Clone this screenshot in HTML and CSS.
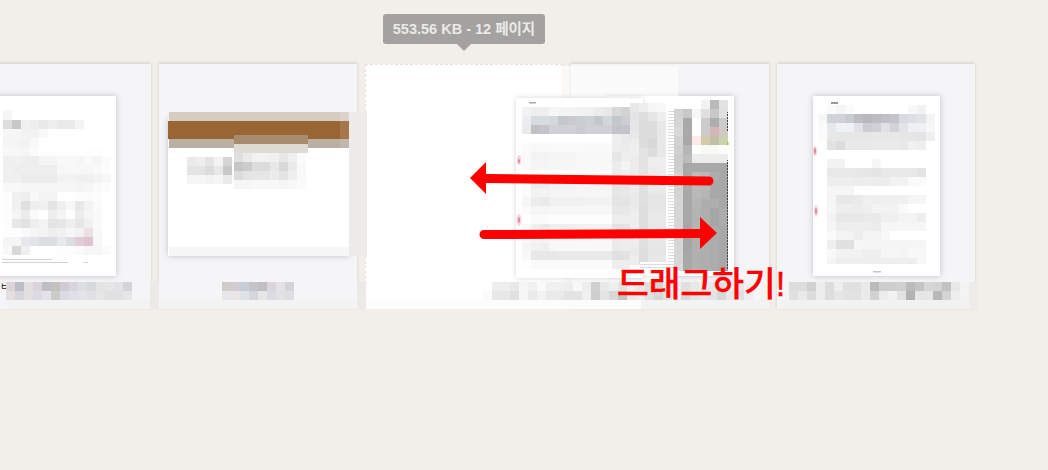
FILE: index.html
```html
<!DOCTYPE html>
<html lang="ko">
<head>
<meta charset="utf-8">
<title>페이지 정렬</title>
<link rel="stylesheet" href="styles.css">
</head>
<body>
<main class="stage">
  <div class="tooltip">553.56 KB - 12 페이지</div>
  <section class="cards">
    <article class="card"><div class="thumb"><div class="page"></div></div></article>
    <article class="card"><div class="thumb"><div class="page page-wide"></div></div></article>
    <article class="card card-empty"></article>
    <article class="card"><div class="thumb"><div class="page"></div></div></article>
    <article class="card"><div class="thumb"><div class="page"></div></div></article>
  </section>
  <div class="ghost"><div class="page"></div></div>
  <span class="cut-name">ㅂ</span>
  <svg id="mosaic" class="layer" width="1048" height="470" viewBox="0 0 1048 470" aria-hidden="true">
    <g>
      <rect x="169" y="112" width="180" height="9" fill="#d6ccc2"/>
      <rect x="168" y="121" width="181" height="18" fill="#9a6535"/>
      <rect x="169" y="139" width="180" height="9" fill="#b9afa2"/>
      <rect x="169" y="247" width="180" height="9" fill="#f6f6f6"/>
      <rect x="340" y="112" width="9" height="144" fill="#fff" fill-opacity=".12"/>
      <rect x="234" y="135" width="74" height="9" fill="#a88b6c"/>
      <rect x="234" y="144" width="74" height="9" fill="#dddbd3"/>
      <rect x="349" y="112" width="18" height="144" fill="#eeecea"/>
      <rect x="150" y="282" width="9" height="27" fill="#eceae6"/>
      <rect x="357" y="282" width="9" height="27" fill="#eceae6"/>
      <rect x="969" y="282" width="9" height="27" fill="#eeecea"/>
      <rect x="6" y="300" width="144" height="9" fill="#f3f3f3"/>
      <rect x="159" y="300" width="198" height="9" fill="#f3f3f3"/>
      <rect x="366" y="300" width="275" height="9" fill="#fdfcfc"/>
      <rect x="641" y="300" width="129" height="9" fill="#f3f3f3"/>
      <rect x="780" y="300" width="189" height="9" fill="#f2f2f2"/>
      <rect x="668" y="110" width="6" height="160" fill="url(#stripes)"/>
      <rect x="640" y="262" width="34" height="6" fill="url(#stripes)"/>
      <rect x="727" y="112" width="1" height="20" fill="url(#dots)"/>
      <rect x="727" y="160" width="1" height="110" fill="url(#dots)"/>
      <rect x="727" y="142" width="1.5" height="3" fill="#8ccf3c"/>
      <ellipse class="stamp" cx="519" cy="160" rx="2" ry="5"/>
      <ellipse class="stamp-core" cx="519" cy="161" rx="1" ry="2"/>
      <ellipse class="stamp" cx="519" cy="220" rx="2.5" ry="6"/>
      <ellipse class="stamp-core" cx="519" cy="220" rx="1" ry="3"/>
      <ellipse class="stamp" cx="815" cy="151" rx="2" ry="5"/>
      <ellipse class="stamp-core" cx="815" cy="151" rx="1" ry="3"/>
      <ellipse class="stamp" cx="816" cy="211" rx="2" ry="6"/>
      <ellipse class="stamp-core" cx="816" cy="211" rx="1" ry="3"/>
      <rect x="529" y="102" width="7" height="1.5" fill="#aaa"/>
      <rect x="831" y="102" width="7" height="2" fill="#999"/>
      <rect x="873" y="271" width="8" height="1.5" fill="#c4c4c4"/>
      <rect x="2" y="259" width="50" height="1" fill="#d4d4d4"/>
      <rect x="2" y="262" width="66" height="1" fill="#d4d4d4"/>
      <rect x="83" y="262" width="5" height="1" fill="#d4d4d4"/>
    </g>
    <defs>
      <pattern id="stripes" width="6" height="3" patternUnits="userSpaceOnUse">
        <rect width="6" height="3" fill="#fff"/>
        <rect width="6" height="1" fill="#dcdcdc"/>
      </pattern>
      <pattern id="dots" width="1" height="3" patternUnits="userSpaceOnUse">
        <rect width="1" height="2" fill="#444"/>
      </pattern>
    </defs>
  </svg>
  <svg class="layer" width="1048" height="470" viewBox="0 0 1048 470" aria-hidden="true">
    <line class="arrow-line" x1="709" y1="181" x2="486" y2="178.5"/>
    <polygon class="arrow-head" points="470,178 486,162 486,194"/>
    <line class="arrow-line" x1="484" y1="234.5" x2="702" y2="233.5"/>
    <polygon class="arrow-head" points="717,233 700,217 700,249"/>
  </svg>
  <p class="drag-label">드래그하기!</p>
</main>
<script src="mosaic.js"></script>
</body>
</html>
```
FILE: styles.css
```css
* { box-sizing: border-box; }
html, body { margin: 0; height: 100%; }
body {
  background: #f2efea;
  overflow: hidden;
  font-family: "Liberation Sans", "Noto Sans CJK KR", sans-serif;
}
.stage {
  position: relative;
  width: 1048px;
  height: 470px;
  overflow: hidden;
  padding-top: 64px;
}
.tooltip {
  position: absolute;
  left: 383px;
  top: 14px;
  width: 162px;
  height: 30px;
  border-radius: 3px;
  background: #a3a2a0;
  color: #ebeae8;
  font-size: 14.5px;
  font-weight: 700;
  line-height: 30px;
  text-align: center;
}
.tooltip::after {
  content: "";
  position: absolute;
  left: 74px;
  top: 30px;
  border: 7px solid transparent;
  border-top-color: #a3a2a0;
  border-bottom-width: 0;
}
.cards {
  display: flex;
  gap: 8px;
  margin-left: -47px;
}
.card {
  flex: 0 0 198px;
  height: 245px;
  padding-top: 32px;
  background: #f5f5f8;
  box-shadow: 0 -1px 3px rgba(90, 80, 70, .2);
}
.card-empty {
  background: #fff;
  border: 1px dashed #f0dcd8;
  box-shadow: none;
}
.thumb {
  display: flex;
  align-items: center;
  justify-content: center;
  height: 180px;
}
.page {
  width: 127px;
  height: 180px;
  background: #fff;
  box-shadow: 0 0 6px rgba(40, 40, 60, .25);
}
.page-wide {
  width: 181px;
  height: 137px;
  margin-top: 3px;
}
.ghost {
  position: absolute;
  left: 480px;
  top: 66px;
  width: 198px;
  height: 234px;
  padding: 32px 36px 0;
  background: rgba(255, 255, 255, .6);
}
.ghost .page {
  box-shadow: 0 0 5px rgba(40, 40, 60, .2);
}
.cut-name {
  position: absolute;
  left: 0;
  top: 281px;
  font-size: 10px;
  line-height: 12px;
  color: #111;
}
.layer {
  position: absolute;
  left: 0;
  top: 0;
}
.stamp { fill: #f6d5da; }
.stamp-core { fill: #dd8494; }
.arrow-line {
  stroke: #ff0000;
  stroke-width: 9;
  stroke-linecap: round;
}
.arrow-head { fill: #ff0000; }
.drag-label {
  position: absolute;
  left: 617px;
  top: 261px;
  margin: 0;
  color: #ff0000;
  font-size: 34.5px;
  font-weight: 500;
  -webkit-text-stroke: 0.4px #ff0000;
  line-height: 46px;
  white-space: nowrap;
}
```
FILE: mosaic.js
```js
// Pixelated (redacted) regions: each block is a 9px cell grid of colours.
var blocks = [
  // page 1
  { x: 3, y: 111, rows: [
    "f5",
    "dd c8 f0 ee e8 ee ea ea f4",
    "f6 f6 f3 f2 f8",
    "f5 f4 f2 f8",
    "f8 f7 f6 fb fe fe fe fe fe fe fd",
    "f0 f0 ee ee f5 f5 f8 f8 f6 f9 f5 fb",
    "f0 ee ee ee ee ee f7 f7 f7 f6 f9 fc",
    "f0 f0 ec ec ec ec f3 f3 f1 f1 f4 f7",
    "f8 f8 f6 f6 f6 f6 f6 f6 f4 f6 fa fc",
    "fd f0 ee f8 f3 f3 ff fe fc fb fd",
    "fd f0 e0 ee f0 e4 ee f7 e8 f3 fb",
    "fd f5 ec fa ff ee f4 fe ec f5 f9",
    "fd e8 e2 ee f4 e4 e6 ee e6 f0 fa",
    "fe fe fa f5 f4 ee f0 f6 f2 ecdfe4 f8",
    "f4f6f4 f5f6f4 e6e8ec e2e4e8 dcdee2 dcdee2 e6e8ec dcdee2 e2cdd6 dfc5d0 f6f8f7",
    "f8 d8 eef0ee ff ff ff fd fc fa f6 f6 fa"
  ]},
  // card labels
  { x: 6, y: 282, rows: [
    "dcd4d6 bdbdc8 e3dfe0 dbd3da bebfc4 c1c1bd d0cbd6 d6d5dd dddee0 d8d9dc e3 e6 e3e3e5 d3d3d9",
    "e4dee0 d7d6df e4dfe2 dcdbe5 e3e2ea cbcbc7 dcdae3 e0e0e6 e4e4e8 dfe0e3 e6 e1e1e3 e1e1e3 e6e6e8"
  ]},
  { x: 222, y: 282, rows: [
    "cfcbc8 d3cad3 c9ced6 c3c3c8 c1bfc4 dbd5de e3e3e5 d3d3d8",
    "e7e7e9 e9e4e6 dde3e6 d6d4dc e6 dcdae3 e2e2e5 dfdfe3"
  ]},
  { x: 483, y: 282, rows: [
    "ff ee ee e8 f6 f0 fa f0 f0 ee f8 ee d0 e8 ee e4 f0 e8 e0 d4 e8 ee e0 e8 ee e8 e0 ee e8 f0 f5",
    "fa e8 e8 e0 f6 ea f2 ea ea e4 e4 f0 ce e4 d8 c4 e8 ee e0 d6 e0 f0 d8 e4 e8 e4 d8 e8 e0 ee f5"
  ]},
  { x: 789, y: 282, rows: [
    "dd dd d0 ed dd ee e0 e0 ea bb ce ce cf bb c4 d6 d4 c2 e8 f3",
    "e0 ea dd ec dc e6 e2 e2 ea d2 ec f1 e2 b3 e6 e6 b8 d4 ee f3"
  ]},
  // page 2 text
  { x: 187, y: 157, rows: [
    "ea ee e4 f3 d4",
    "e4 e4 dc e8 c8",
    "f6 f6 f3 f5 ea"
  ]},
  { x: 234, y: 153, rows: [
    "e0 ea f2 f2 f0 e8 f0 fa",
    "c6 cc dc dc e8 d8 ea f9",
    "dc e4 e6 e6 ec e4 ef f9",
    "f6 f6 f8 f8 f8 f5 f8 fb"
  ]},
  // dragged page
  { x: 522, y: 107, rows: [
    "f2 ee ee f6 f4 f4 f2 f0 ec e8 d8 d2",
    "ecedf0 d8dbe0 d8dbe0 d4d7db c3c6cb c8cacf cacdd2 cdd0d6 c5c8cd d3d6da c4c7cc ccced3",
    "ea c0c0c6 c4c4ca d0d0d6 d0d0d6 d0d0d6 cbcbd1 d0d0d6 cfcfd5 cfcfd5 c3c3c9 c3c3c9",
    "ff ff ff ff ff ff ff ff ff ff ee ea",
    "fb f9 f9 fa fa fa fa f9 f9 f9 ee ec",
    "fa f3 f3 f5 f5 f5 f8 f8 f8 f8 e6 ee",
    "fa f5 f5 f7 f7 f7 f8 f8 f8 f8 ec f4",
    "ff fc fc ff ff fc fc fc fc fc ec ee",
    "fb ee ee f3 f3 f3 f6 f6 f6 f6 e4 e6",
    "fb f2 f3 f5 f5 f5 f6 f6 f6 f6 e6 e8",
    "f6 ec ea f0 f0 f0 f0 f2 f2 f2 e4 e4",
    "fa f5 f5 f7 f7 f7 f7 f7 f7 f7 e8 e8",
    "ff fb fb fd fd fd fd fd fd fd ee ee",
    "f8 ee ea ee ee ee f2 f2 f2 f2 e2 e4",
    "fb f5 f5 f8 f8 f8 f8 f8 f8 f8 ea ec",
    "f5 f2 f0 f7 f8 f8 f8 f8 f8 f8 ea ec",
    "f8 e8 e8 e8 ea ea ea ea ea ea e0 e2",
    "fd fa fa fa fb fb fb fb fb fb ee ee"
  ]},
  { x: 630, y: 103, rows: [
    "e8 ee f6 f8",
    "e4 dd e6 ee",
    "e6 dc dc e8",
    "e8 dc dc e8",
    "ee dd d8 e8",
    "ee e3 dd e8",
    "ec e3 ee ee",
    "ec e4 ec ec",
    "ee e0 e6 ea",
    "ec e0 ea ea",
    "ea e0 e6 e6",
    "ea de e6 e6",
    "ee de e8 e8",
    "ee de e8 e8",
    "ea de e6 e6",
    "ee e0 e8 e8",
    "ea de e6 e6",
    "ee de e8 e8"
  ]},
  // page 4 right side
  { x: 701, y: 100, rows: [ "f2 b9 e2" ] },
  { x: 674, y: 109, rows: [
    "d2 c8 f6 e0 c8 e0",
    "d5 a9 ff cc ae cc",
    "d8 aa ff cc d5b5b5 d2c8c8",
    "d2 a8 ffe8e8 d4cbab bfc0a5 c8d4b0",
    "d0 b5 ff f8fbf5 f8fbf5 fbfcf8",
    "cc bb ec ec ec ec",
    "ce a8 a8 a8 a8 a8",
    "d4 a8 bb b8 ad a8",
    "d4 aa ba b8 a8 a8",
    "d4 a8 b8 b5 a8 a8",
    "d6 a8 b6 ae ae a8",
    "d6 a8 b4 ae a6 ac",
    "d6 a8 b4 ae a6 ac",
    "d6 a6 b4 ae ac a8",
    "d6 a6 b0 ae ac a8",
    "d6 a6 b0 ae ac a8",
    "d6 a8 b0 ae ac a8",
    "d8 a8 b0 ae ac a8"
  ]},
  // page 5
  { x: 818, y: 105, rows: [
    "ff fa f5 fb ff ff ff ff ff ff f8 f2",
    "f8 d0d3da d0d3da c8cbd1 bdbdc2 b8b8bc bcbcc2 c0c0c6 c4c4ca d8dbe0 dcdfe3 e0e3e7 f3",
    "fa e6e8ee eef1f6 eef1f6 e0e2e8 cccdd3 cfd0d6 e0e1e6 d2d3d9 e2e4e8 eef0f4 eef0f4 f6f7f9",
    "fb e8 e6 e6 e6 e6 e8 e8 e8 e6 e6 e4 f0",
    "ff e2 dc e8 e8 e8 ea ea ea e8 f0 ee",
    "ff ff ff ff ff ff ff ff ff",
    "ff f2 f2 ff ff ff f7",
    "ff e8 e8 e8 e8 e6 e4 e8 e8 e8 e8 e4",
    "ff ee ee ee ec ee ec ec f2 f2 fa fa",
    "ff f6 f6 f6",
    "ff f6 e8 e8 ea f0 ee f0 f0 f0 f5 f5",
    "ff f6 ee ee ec ee f3 f3 f3 fa",
    "ff f3 e8 e8 e8 ea ea f0 f0 f4 f4 ee",
    "ff f6 ee ee ee ee ec f6 f6 f6 f6 f6",
    "ff fa f3 f3 ee f3 f3 f8",
    "ff ee e0 e0 f7 f5 f5 f5 f5 f5 f6 f6",
    "ff f8 f2 f2 f2 ef ef f6 f6 f4 f8 f8"
  ]},
  { x: 827, y: 258, h: 6, rows: [ "f4 ee ee ee ee ee ee ee ee ee f8" ] }
];

var SVG_NS = "http://www.w3.org/2000/svg";
var layer = document.getElementById("mosaic");
var fragment = document.createDocumentFragment();

// Blocks belonging to the page sit under the overlay lines drawn in the static group.
blocks.forEach(function (block) {
  block.rows.forEach(function (row, r) {
    row.split(" ").forEach(function (cell, c) {
      var rect = document.createElementNS(SVG_NS, "rect");
      var colour = cell.length === 2 ? cell + cell + cell : cell;
      rect.setAttribute("x", block.x + c * 9);
      rect.setAttribute("y", block.y + r * 9);
      rect.setAttribute("width", 9);
      rect.setAttribute("height", block.h || 9);
      rect.setAttribute("fill", "#" + colour);
      fragment.appendChild(rect);
    });
  });
});

layer.insertBefore(fragment, layer.firstChild);
```
